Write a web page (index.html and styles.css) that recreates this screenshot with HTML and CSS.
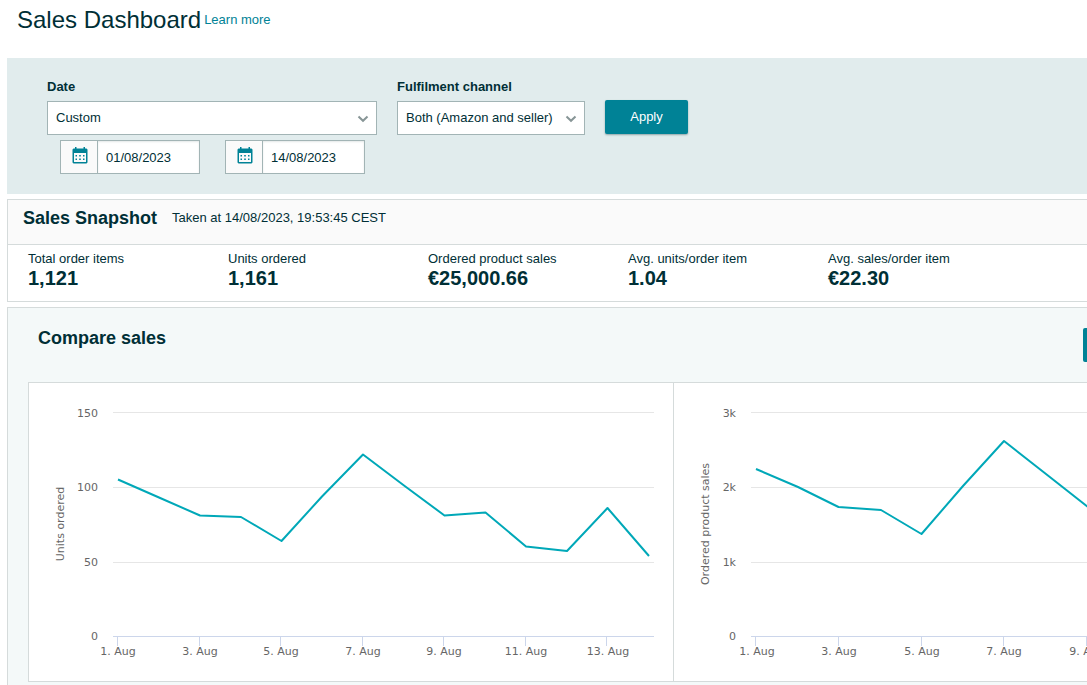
FILE: index.html
```html
<!DOCTYPE html>
<html lang="en">
<head>
<meta charset="utf-8">
<title>Sales Dashboard</title>
<link rel="stylesheet" href="styles.css">
</head>
<body>
<svg class="sprite" aria-hidden="true">
  <symbol id="calendar" viewBox="0 0 16 17">
    <path fill="#008296" fill-rule="evenodd" d="M3 0h1.500v1.500h7V0H13v1.500h1.500l1 1V15.500l-1 1h-13l-1-1V2.500l1-1H3zM2 6v9h12V6z"/>
    <path fill="#008296" d="M3.500 8H5v1.500H3.500zM7.200 8h1.600v1.500H7.200zM11 8h1.500v1.500H11zM3.500 11.500H5V13H3.500zM7.200 11.500h1.600V13H7.200zM11 11.500h1.500V13H11z"/>
  </symbol>
  <symbol id="chevron" viewBox="0 0 12 8">
    <path d="M1.500 1.500L6 5.800l4.500-4.300" fill="none" stroke="#879596" stroke-width="2"/>
  </symbol>
</svg>
<main class="page">
  <header class="page-header">
    <h1 class="page-title">Sales Dashboard</h1>
    <a class="link" href="#">Learn more</a>
  </header>

  <form class="filters">
    <div class="field field-date">
      <label class="label" for="date">Date</label>
      <div class="select-wrap">
        <select class="select" id="date"><option>Custom</option></select>
        <svg class="chevron"><use href="#chevron"/></svg>
      </div>
      <div class="dates">
        <label class="date-box">
          <span class="date-icon"><svg class="calendar"><use href="#calendar"/></svg></span>
          <input class="date-input" type="text" aria-label="From" value="01/08/2023">
        </label>
        <label class="date-box">
          <span class="date-icon"><svg class="calendar"><use href="#calendar"/></svg></span>
          <input class="date-input" type="text" aria-label="To" value="14/08/2023">
        </label>
      </div>
    </div>
    <div class="field field-channel">
      <label class="label" for="channel">Fulfilment channel</label>
      <div class="select-wrap">
        <select class="select" id="channel"><option>Both (Amazon and seller)</option></select>
        <svg class="chevron"><use href="#chevron"/></svg>
      </div>
    </div>
    <button class="button apply" type="button">Apply</button>
  </form>

  <section class="snapshot">
    <div class="snapshot-head">
      <h2 class="heading">Sales Snapshot</h2>
      <span>Taken at 14/08/2023, 19:53:45 CEST</span>
    </div>
    <dl class="stats">
      <div class="stat"><dt>Total order items</dt><dd>1,121</dd></div>
      <div class="stat"><dt>Units ordered</dt><dd>1,161</dd></div>
      <div class="stat"><dt>Ordered product sales</dt><dd>€25,000.66</dd></div>
      <div class="stat"><dt>Avg. units/order item</dt><dd>1.04</dd></div>
      <div class="stat"><dt>Avg. sales/order item</dt><dd>€22.30</dd></div>
    </dl>
  </section>

  <section class="compare">
    <div class="compare-head">
      <h2 class="heading">Compare sales</h2>
      <button class="button compare-button" type="button" aria-label="Compare"></button>
    </div>
    <div class="charts">
      <svg class="chart" width="645" height="298" role="img" aria-label="Units ordered">
        <path class="grid" d="M84 29.500H625M84 104.500H625M84 179.500H625"/>
        <path class="axis" d="M84 253.500H625M88.500 254v9M170.500 254v9M251.500 254v9M333.500 254v9M414.500 254v9M496.500 254v9M577.500 254v9"/>
        <polyline class="line" points="89,96.500 130,114.500 171,132.500 212,134 252.500,158 293,113.500 334,71.500 375,102.500 415.500,132.500 456.500,129.500 497,163.500 538,168 578.500,125 620,173"/>
        <g class="tick end"><text x="69" y="34">150</text><text x="69" y="108">100</text><text x="69" y="183">50</text><text x="69" y="257">0</text></g>
        <g class="tick mid"><text x="89" y="272">1. Aug</text><text x="171" y="272">3. Aug</text><text x="252" y="272">5. Aug</text><text x="334" y="272">7. Aug</text><text x="415" y="272">9. Aug</text><text x="497" y="272">11. Aug</text><text x="579" y="272">13. Aug</text></g>
        <text class="tick mid" transform="translate(35 141) rotate(-90)">Units ordered</text>
      </svg>
      <svg class="chart" width="645" height="298" role="img" aria-label="Ordered product sales">
        <path class="grid" d="M77 29.500H625M77 104.500H625M77 179.500H625"/>
        <path class="axis" d="M77 253.500H625M81.500 254v9M164.500 254v9M247.500 254v9M329.500 254v9M412.500 254v9"/>
        <polyline class="line" points="82,86 124,104 164.500,124 207,127 247.500,151 289,103 330,58 372,91 414,124"/>
        <g class="tick end"><text x="62" y="34">3k</text><text x="62" y="108">2k</text><text x="62" y="183">1k</text><text x="62" y="257">0</text></g>
        <g class="tick mid"><text x="83" y="272">1. Aug</text><text x="165" y="272">3. Aug</text><text x="248" y="272">5. Aug</text><text x="330" y="272">7. Aug</text><text x="413" y="272">9. Aug</text></g>
        <text class="tick mid" transform="translate(35 141) rotate(-90)">Ordered product sales</text>
      </svg>
    </div>
  </section>
</main>
</body>
</html>
```
FILE: styles.css
```css
* { box-sizing: border-box; }
body {
  margin: 0;
  overflow: hidden;
  background: #fff;
  color: #002f36;
  font: 13px/20px "Liberation Sans", Arial, sans-serif;
}
h1, h2, dl, dd { margin: 0; }
.sprite { display: none; }
.page { padding-left: 7px; }
.page-header {
  display: flex;
  align-items: center;
  gap: 3px;
  padding: 4px 10px 22px;
}
.page-title { font-size: 24px; line-height: 32px; font-weight: 400; }
.link { color: #008296; text-decoration: none; }

.filters {
  display: flex;
  align-items: flex-start;
  gap: 20px;
  padding: 19px 40px 20px;
  background: #e1eced;
}
.field { display: flex; flex-direction: column; }
.field-date { width: 330px; }
.field-channel { width: 188px; }
.label { margin-bottom: 4px; font-weight: 700; }
.select-wrap { display: grid; align-items: center; }
.select {
  grid-area: 1 / 1;
  width: 100%;
  height: 34px;
  padding: 0 8px;
  border: 1px solid #a2b4b5;
  border-radius: 0;
  background: #fff;
  color: inherit;
  font: inherit;
  appearance: none;
}
.chevron {
  grid-area: 1 / 1;
  justify-self: end;
  width: 12px;
  height: 8px;
  margin: 2px 8px 0 0;
  pointer-events: none;
}
.dates { display: flex; gap: 25px; padding: 5px 12px 0 13px; }
.date-box {
  display: flex;
  width: 140px;
  height: 34px;
  border: 1px solid #a2b4b5;
  background: #fff;
}
.date-icon {
  display: flex;
  justify-content: center;
  flex: 0 0 37px;
  padding: 6px 0 0 1px;
  border-right: 1px solid #a2b4b5;
  background: #fafafa;
}
.calendar { width: 16px; height: 17px; }
.date-input {
  flex: 1;
  min-width: 0;
  padding: 2px 8px 0;
  border: 0;
  background: none;
  box-shadow: inset 0 1px 2px #e4e8e8;
  color: inherit;
  font: inherit;
}
.button {
  height: 34px;
  border: 0;
  border-radius: 2px;
  background: #008296;
  color: #fff;
  font: inherit;
}
.apply { width: 83px; margin-top: 23px; box-shadow: 0 1px 2px #8fa5a8; }

.snapshot { margin-top: 5px; border: 1px solid #d5dbdb; border-right: 0; }
.snapshot-head {
  display: flex;
  align-items: center;
  gap: 15px;
  padding: 6px 15px 14px;
  border-bottom: 1px solid #d5dbdb;
  background: #fafafa;
}
.heading { font-size: 18px; line-height: 24px; font-weight: 700; }
.stats { display: flex; padding: 4px 20px 14px; }
.stat { flex: 0 0 200px; }
.stat dd { font-size: 20px; line-height: 18px; font-weight: 700; }

.compare {
  margin-top: 5px;
  border: 1px solid #d5dbdb;
  border-right: 0;
  background: #f4f9f9;
}
.compare-head {
  display: flex;
  justify-content: space-between;
  padding: 20px 0 20px 30px;
}
.compare-head .heading { line-height: 20px; }
.compare-button { width: 4px; padding: 0; border-radius: 2px 0 0 2px; }
.charts {
  display: flex;
  margin: 0 0 20px 20px;
  overflow: hidden;
  border: 1px solid #d5dbdb;
  border-right: 0;
  background: #fff;
}
.chart { flex: none; border-right: 1px solid #d5dbdb; }
.grid { fill: none; stroke: #e6e6e6; }
.axis { fill: none; stroke: #ccd6eb; }
.line { fill: none; stroke: #00a8b8; stroke-width: 2; stroke-linejoin: round; }
.tick { fill: #666; font: 11px "DejaVu Sans", Verdana, sans-serif; }
.mid { text-anchor: middle; }
.end { text-anchor: end; }
```
